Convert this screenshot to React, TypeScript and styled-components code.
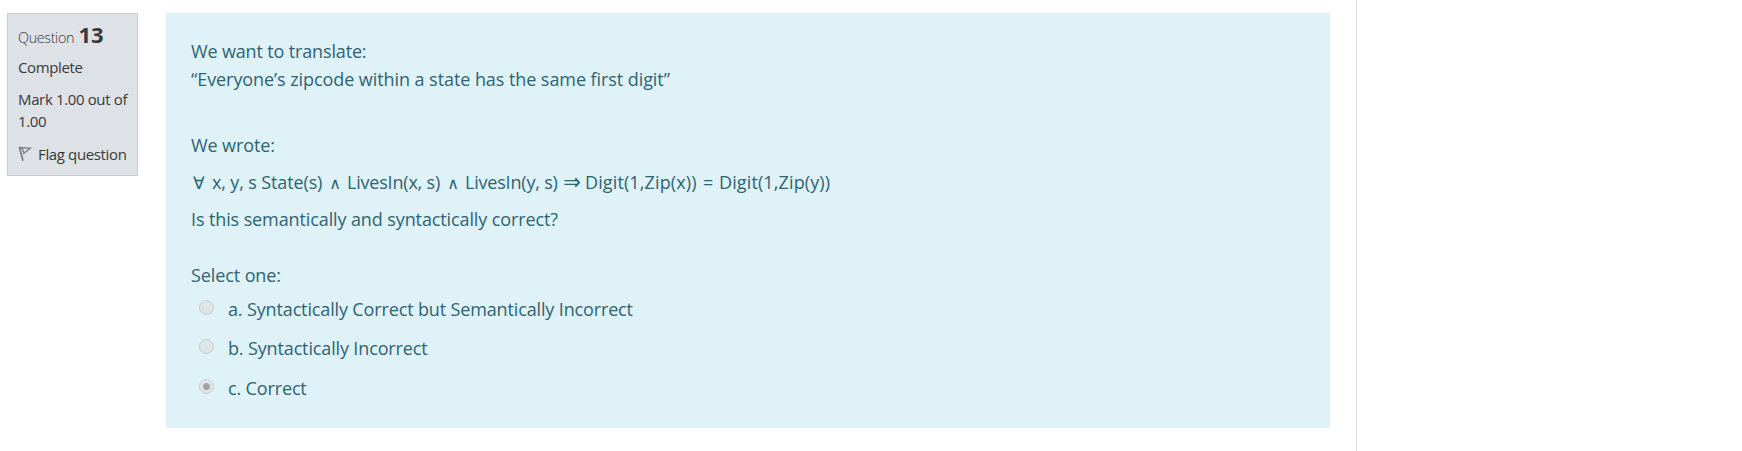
import React from "react";
import styled, { createGlobalStyle } from "styled-components";

const GlobalStyle = createGlobalStyle`
  *, *::before, *::after { box-sizing: border-box; }
  body {
    margin: 0;
    background: #fff;
    color: #373a3c;
    font-family: "Open Sans", "Noto Sans", sans-serif;
  }
`;

const Page = styled.div`
  display: flex;
  height: 451px;
  overflow: hidden;
`;

const Main = styled.main`
  display: flex;
  align-items: flex-start;
  gap: 28px;
  width: 1357px;
  padding: 13px 0 0 7px;
  border-right: 1px solid #d9dbde;
`;

const Info = styled.aside`
  display: flex;
  flex-direction: column;
  width: 131px;
  height: 163px;
  padding: 8px 0 0 10px;
  border: 1px solid #cacfd6;
  background: #dee2e6;
  font-size: 15px;
  line-height: 22px;
  letter-spacing: -0.36px;
`;

const QuestionTitle = styled.h3`
  margin: 0 0 10px;
  height: 24px;
  font-size: 14.4px;
  font-weight: 300;
  line-height: 24px;
  white-space: nowrap;
`;

const QuestionNumber = styled.span`
  margin-left: 1px;
  font-size: 22px;
  font-weight: 700;
  letter-spacing: -0.2px;
`;

const InfoText = styled.div`
  margin-bottom: 10px;
`;

const FlagRow = styled.div`
  display: flex;
  align-items: center;
  gap: 6px;
  margin-top: 1px;
  white-space: nowrap;
`;

const Content = styled.section`
  width: 1164px;
  height: 415px;
  padding: 24px 25px;
  background: #def2f8;
  color: #2f6473;
  font-size: 18px;
  line-height: 28px;
`;

const Line = styled.p<{ $track?: number; $after?: number }>`
  margin: 0 0 ${(p) => p.$after ?? 0}px;
  height: 28px;
  letter-spacing: ${(p) => p.$track ?? -0.1}px;
  white-space: nowrap;
`;

const Formula = styled.div`
  display: flex;
  align-items: baseline;
  height: 28px;
  margin-bottom: 9px;
  white-space: nowrap;
`;

const Term = styled.span<{ $width: number; $track?: number }>`
  width: ${(p) => p.$width}px;
  letter-spacing: ${(p) => p.$track ?? -0.1}px;
`;

const Symbol = styled(Term)<{ $size?: number }>`
  font-family: "DejaVu Sans", sans-serif;
  font-size: ${(p) => p.$size ?? 17}px;
  text-align: center;
`;

const Quantifier = styled(Symbol)`
  padding-left: 2px;
  text-align: left;
`;

const Equals = styled(Term)`
  padding-left: 8px;
`;

const Options = styled.div`
  display: flex;
  flex-direction: column;
`;

const Option = styled.label<{ $height: number }>`
  display: flex;
  align-items: flex-start;
  height: ${(p) => p.$height}px;
  padding-left: 8px;
  gap: 14px;
  letter-spacing: -0.14px;
`;

const Radio = styled.span<{ $checked?: boolean }>`
  display: grid;
  place-items: center;
  width: 15px;
  height: 15px;
  margin-top: 5px;
  border: 1px solid #c3cbce;
  border-radius: 50%;
  background: linear-gradient(#e3e9eb, #dde3e5);

  &::after {
    content: "";
    width: 7px;
    height: 7px;
    border-radius: 50%;
    background: ${(p) => (p.$checked ? "#a0a3a4" : "transparent")};
  }
`;

function FlagIcon() {
  return (
    <svg width="14" height="16" viewBox="0 0 14 16" fill="none" stroke="#77797b">
      <path d="M1.5 1.5L5 14.8" strokeWidth="1.7" />
      <path d="M0.8 1.5L12.3 2.2L5.2 7.8M4 2L5.8 6.6" strokeWidth="1.3" />
    </svg>
  );
}

const options = [
  { text: "a. Syntactically Correct but Semantically Incorrect", height: 39 },
  { text: "b. Syntactically Incorrect", height: 40 },
  { text: "c. Correct", height: 28, checked: true },
];

export default function App() {
  return (
    <>
      <GlobalStyle />
      <Page>
        <Main>
          <Info>
            <QuestionTitle>
              Question <QuestionNumber>13</QuestionNumber>
            </QuestionTitle>
            <InfoText>Complete</InfoText>
            <InfoText>
              Mark 1.00 out of
              <br />
              1.00
            </InfoText>
            <FlagRow>
              <FlagIcon />
              Flag question
            </FlagRow>
          </Info>
          <Content>
            <Line $track={-0.15}>We want to translate:</Line>
            <Line $track={-0.07} $after={38}>
              “Everyone’s zipcode within a state has the same first digit”
            </Line>
            <Line $after={9}>We wrote:</Line>
            <Formula>
              <Quantifier $width={21}>∀</Quantifier>
              <Term $width={111} $track={-0.13}>x, y, s State(s)</Term>
              <Symbol $width={24} $size={16}>∧</Symbol>
              <Term $width={94} $track={-0.2}>LivesIn(x, s)</Term>
              <Symbol $width={24} $size={16}>∧</Symbol>
              <Term $width={94} $track={-0.2}>LivesIn(y, s)</Term>
              <Symbol $width={26} $size={21}>⇒</Symbol>
              <Term $width={110} $track={0.12}>Digit(1,Zip(x))</Term>
              <Equals $width={24}>=</Equals>
              <Term $width={112} $track={0.12}>Digit(1,Zip(y))</Term>
            </Formula>
            <Line $track={-0.11} $after={28}>
              Is this semantically and syntactically correct?
            </Line>
            <Line $after={6}>Select one:</Line>
            <Options>
              {options.map((o) => (
                <Option key={o.text} $height={o.height}>
                  <Radio $checked={o.checked} />
                  {o.text}
                </Option>
              ))}
            </Options>
          </Content>
        </Main>
      </Page>
    </>
  );
}
